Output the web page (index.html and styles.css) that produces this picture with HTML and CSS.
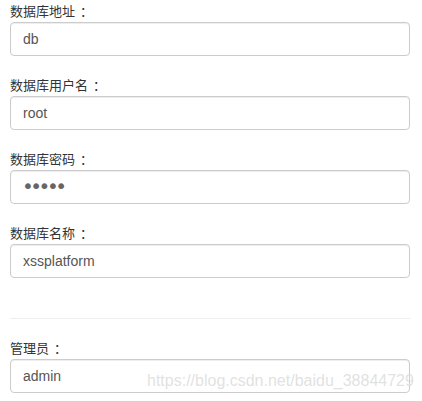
FILE: index.html
```html
<!DOCTYPE html>
<html lang="zh-CN">
<head>
<meta charset="utf-8">
<link rel="stylesheet" href="styles.css">
</head>
<body>
<form class="form">
  <div class="form-group">
    <label class="label">数据库地址<span class="colon">：</span></label>
    <input class="form-control" type="text" value="db">
  </div>
  <div class="form-group">
    <label class="label">数据库用户名<span class="colon">：</span></label>
    <input class="form-control" type="text" value="root">
  </div>
  <div class="form-group">
    <label class="label">数据库密码<span class="colon">：</span></label>
    <input class="form-control form-control-password" type="password" value="12345">
  </div>
  <div class="form-group">
    <label class="label">数据库名称<span class="colon">：</span></label>
    <input class="form-control" type="text" value="xssplatform">
  </div>
  <hr class="divider">
  <div class="form-group">
    <label class="label">管理员<span class="colon">：</span></label>
    <input class="form-control" type="text" value="admin">
  </div>
</form>
<div class="watermark">https://blog.csdn.net/baidu_38844729</div>
</body>
</html>
```
FILE: styles.css
```css
html, body {
  margin: 0;
  padding: 0;
  background: #fff;
  overflow: hidden;
}
body {
  width: 422px;
  height: 401px;
  position: relative;
  font-family: "Liberation Sans", Arial, "Noto Sans CJK SC", sans-serif;
}
.form {
  padding: 2px 12px 0 10px;
  display: flex;
  flex-direction: column;
}
.form-group {
  display: flex;
  flex-direction: column;
  margin-bottom: 20px;
}
.label {
  font-family: "Noto Sans CJK SC", sans-serif;
  font-size: 13px;
  line-height: 18px;
  color: #333;
  margin-bottom: 2px;
}
.colon {
  font-family: "Noto Sans CJK TC", sans-serif;
  margin-left: 5px;
}
.form-control {
  box-sizing: border-box;
  width: 400px;
  height: 34px;
  margin: 0;
  padding: 6px 12px;
  font-family: "Liberation Sans", Arial, sans-serif;
  font-size: 14px;
  line-height: 20px;
  color: #555;
  background: #fff;
  border: 1px solid #ccc;
  border-radius: 4px;
  box-shadow: inset 0 1px 1px rgba(0,0,0,.075);
  outline: none;
}
.form-control-password {
  font-family: "DejaVu Sans", sans-serif;
  font-size: 20px;
  letter-spacing: -3.5px;
  padding: 0 12px 2px 11px;
  color: #666;
}
.divider {
  margin: 20px 0;
  height: 0;
  border: 0;
  border-top: 1px solid #eee;
  width: 400px;
}
.watermark {
  position: absolute;
  left: 147px;
  top: 371px;
  font-family: "Liberation Sans", Arial, sans-serif;
  font-size: 16px;
  line-height: 20px;
  color: rgba(200,200,200,0.55);
  text-shadow: 0 0 1px rgba(255,255,255,0.6);
  white-space: nowrap;
}
```
